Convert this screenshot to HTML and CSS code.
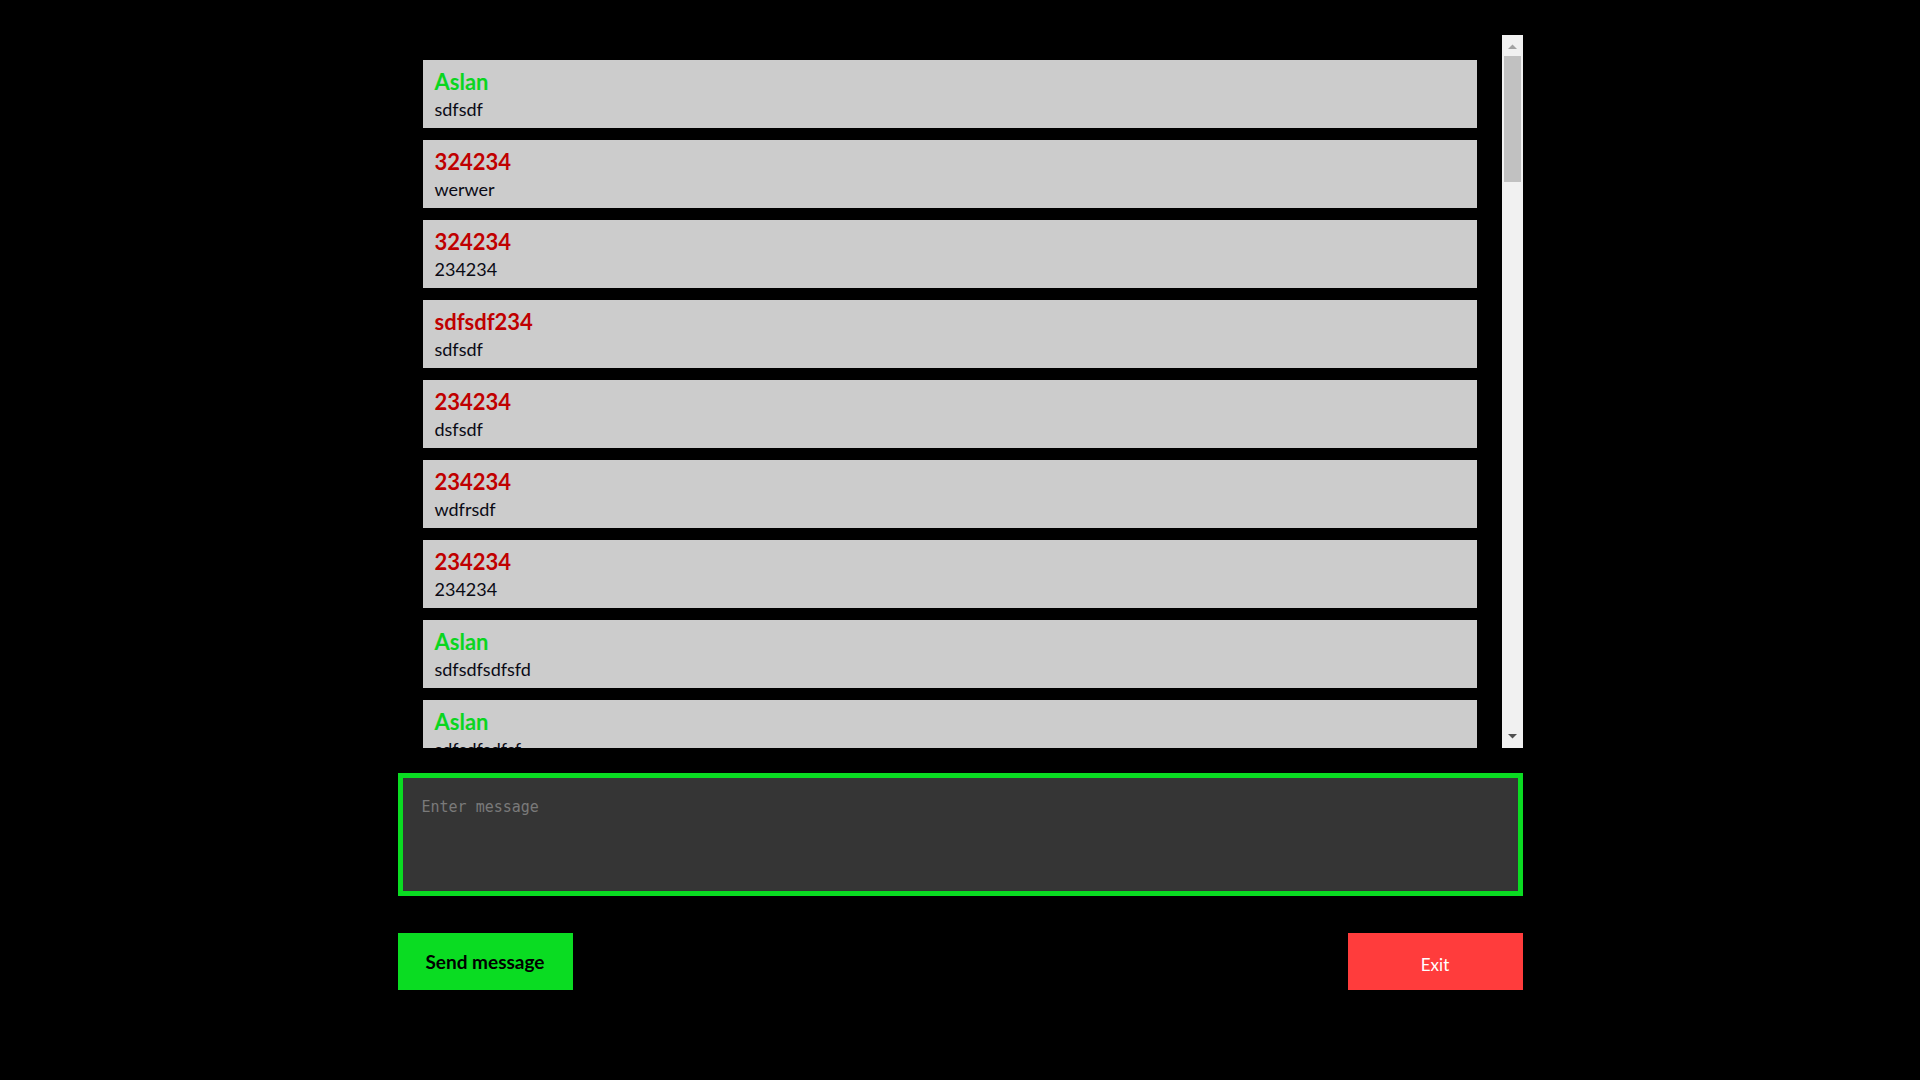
FILE: index.html
```html
<!DOCTYPE html>
<html lang="en">
<head>
<meta charset="utf-8">
<title>Chat</title>
<link rel="stylesheet" href="styles.css">
</head>
<body>
<main class="chat">
  <div class="list-wrap">
    <section class="messages">
      <div class="msg"><div class="name self">Aslan</div><div class="text">sdfsdf</div></div>
      <div class="msg"><div class="name other">324234</div><div class="text">werwer</div></div>
      <div class="msg"><div class="name other">324234</div><div class="text">234234</div></div>
      <div class="msg"><div class="name other">sdfsdf234</div><div class="text">sdfsdf</div></div>
      <div class="msg"><div class="name other">234234</div><div class="text">dsfsdf</div></div>
      <div class="msg"><div class="name other">234234</div><div class="text">wdfrsdf</div></div>
      <div class="msg"><div class="name other">234234</div><div class="text">234234</div></div>
      <div class="msg"><div class="name self">Aslan</div><div class="text">sdfsdfsdfsfd</div></div>
      <div class="msg"><div class="name self">Aslan</div><div class="text">sdfsdfsdfsf</div></div>
    </section>
    <div class="scrollbar">
      <div class="sb-btn"><svg width="21" height="21" viewBox="0 0 21 21"><polygon points="6,14 15,14 10.5,9.5" fill="#a3a3a3"/></svg></div>
      <div class="sb-track"><div class="sb-thumb"></div></div>
      <div class="sb-btn"><svg width="21" height="21" viewBox="0 0 21 21"><polygon points="6,7 15,7 10.5,11.5" fill="#505050"/></svg></div>
    </div>
  </div>
  <textarea class="input" placeholder="Enter message"></textarea>
  <div class="actions">
    <button class="btn send">Send message</button>
    <button class="btn exit">Exit</button>
  </div>
</main>
</body>
</html>
```

FILE: styles.css
```css
html, body {
  margin: 0;
  padding: 0;
  background: #000;
}

body {
  font-family: Lato, "Open Sans", sans-serif;
}

.chat {
  width: 1125px;
  margin: 0 auto;
  padding-top: 35px;
  display: flex;
  flex-direction: column;
}

.list-wrap {
  height: 713px;
  display: flex;
}

.messages {
  flex: 1;
  min-width: 0;
  box-sizing: border-box;
  padding: 25px 25px 0 25px;
  overflow: hidden;
  display: flex;
  flex-direction: column;
  gap: 12px;
}

.scrollbar {
  width: 21px;
  flex: none;
  background: #f1f1f1;
  display: flex;
  flex-direction: column;
}
.sb-btn {
  height: 21px;
  flex: none;
}
.sb-btn svg {
  display: block;
}
.sb-track {
  flex: 1;
}
.sb-thumb {
  height: 126px;
  margin: 0 2px;
  background: #c1c1c1;
}

.msg {
  flex: none;
  height: 68px;
  box-sizing: border-box;
  padding: 8px 12px 6px;
  background: #cccccc;
}

.name {
  font-size: 22px;
  font-weight: 700;
  line-height: 28px;
}
.name.self { color: #0ad620; }
.name.other { color: #c00000; }

.text {
  font-size: 18px;
  line-height: 26px;
  color: #0a0a14;
}

.input {
  margin-top: 25px;
  height: 123px;
  box-sizing: border-box;
  border: 5px solid #0adc22;
  background: #353535;
  color: #ddd;
  padding: 20px 19px;
  font-family: "DejaVu Sans Mono", "Liberation Mono", monospace;
  font-size: 15px;
  resize: none;
  outline: none;
  display: block;
  width: 100%;
}
.input::placeholder {
  color: #7a7a7a;
}

.actions {
  margin-top: 37px;
  display: flex;
  justify-content: space-between;
}

.btn {
  width: 175px;
  height: 57px;
  border: none;
  font-family: Lato, "Open Sans", sans-serif;
  font-size: 17px;
  cursor: pointer;
}
.btn.send {
  background: #0adc22;
  color: #000;
  font-weight: 700;
  font-size: 19px;
}
.btn.exit {
  background: #ff3c3c;
  color: #fff;
  padding-top: 6px;
}
```
